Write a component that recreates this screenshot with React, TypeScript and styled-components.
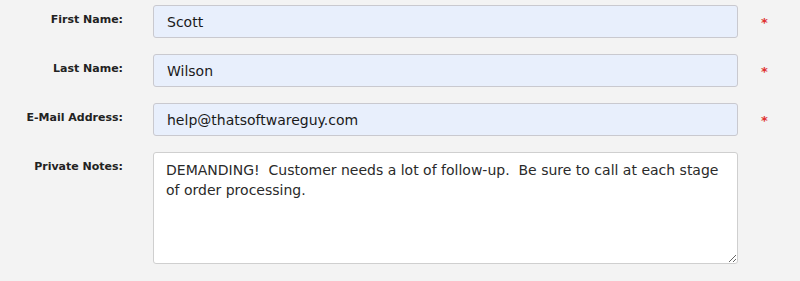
import styled, { createGlobalStyle } from 'styled-components';

const GlobalStyle = createGlobalStyle`
  html, body {
    margin: 0;
    padding: 0;
    background: #f3f3f3;
  }
`;

const fields = [
  { label: 'First Name:', value: 'Scott', required: true },
  { label: 'Last Name:', value: 'Wilson', required: true },
  { label: 'E-Mail Address:', value: 'help@thatsoftwareguy.com', required: true },
];

const notes =
  'DEMANDING!  Customer needs a lot of follow-up.  Be sure to call at each stage of order processing.';

export default function App() {
  return (
    <>
      <GlobalStyle />
      <Form>
        {fields.map((f) => (
          <Row key={f.label}>
            <Label>{f.label}</Label>
            <Input defaultValue={f.value} />
            {f.required && <Required>*</Required>}
          </Row>
        ))}
        <Row>
          <Label>Private Notes:</Label>
          <Notes defaultValue={notes} />
        </Row>
      </Form>
    </>
  );
}

const Form = styled.form`
  display: flex;
  flex-direction: column;
  gap: 16px;
  padding-top: 5px;
  width: 800px;
  font-family: 'DejaVu Sans', Verdana, sans-serif;
`;

const Row = styled.div`
  display: flex;
  align-items: flex-start;
`;

const Label = styled.label`
  flex: 0 0 123px;
  margin-right: 30px;
  text-align: right;
  font-size: 11px;
  font-weight: bold;
  color: #222;
  padding-top: 8px;
`;

const Input = styled.input`
  box-sizing: border-box;
  flex: 0 0 585px;
  height: 33px;
  padding: 0 13px;
  border: 1px solid #c9c9cf;
  border-radius: 3px;
  background: #e8effc;
  font-family: 'DejaVu Sans', Verdana, sans-serif;
  font-size: 14px;
  color: #1a1a1a;
  outline: none;
`;

const Notes = styled.textarea`
  box-sizing: border-box;
  flex: 0 0 585px;
  height: 112px;
  padding: 7px 12px;
  border: 1px solid #cfcfcf;
  border-radius: 3px;
  background: #fff;
  font-family: 'DejaVu Sans', Verdana, sans-serif;
  font-size: 14px;
  line-height: 20px;
  color: #2a2a2a;
  resize: vertical;
  outline: none;
`;

const Required = styled.span`
  margin-left: 23px;
  color: #e03030;
  font-size: 13px;
  font-weight: bold;
  padding-top: 10px;
`;
